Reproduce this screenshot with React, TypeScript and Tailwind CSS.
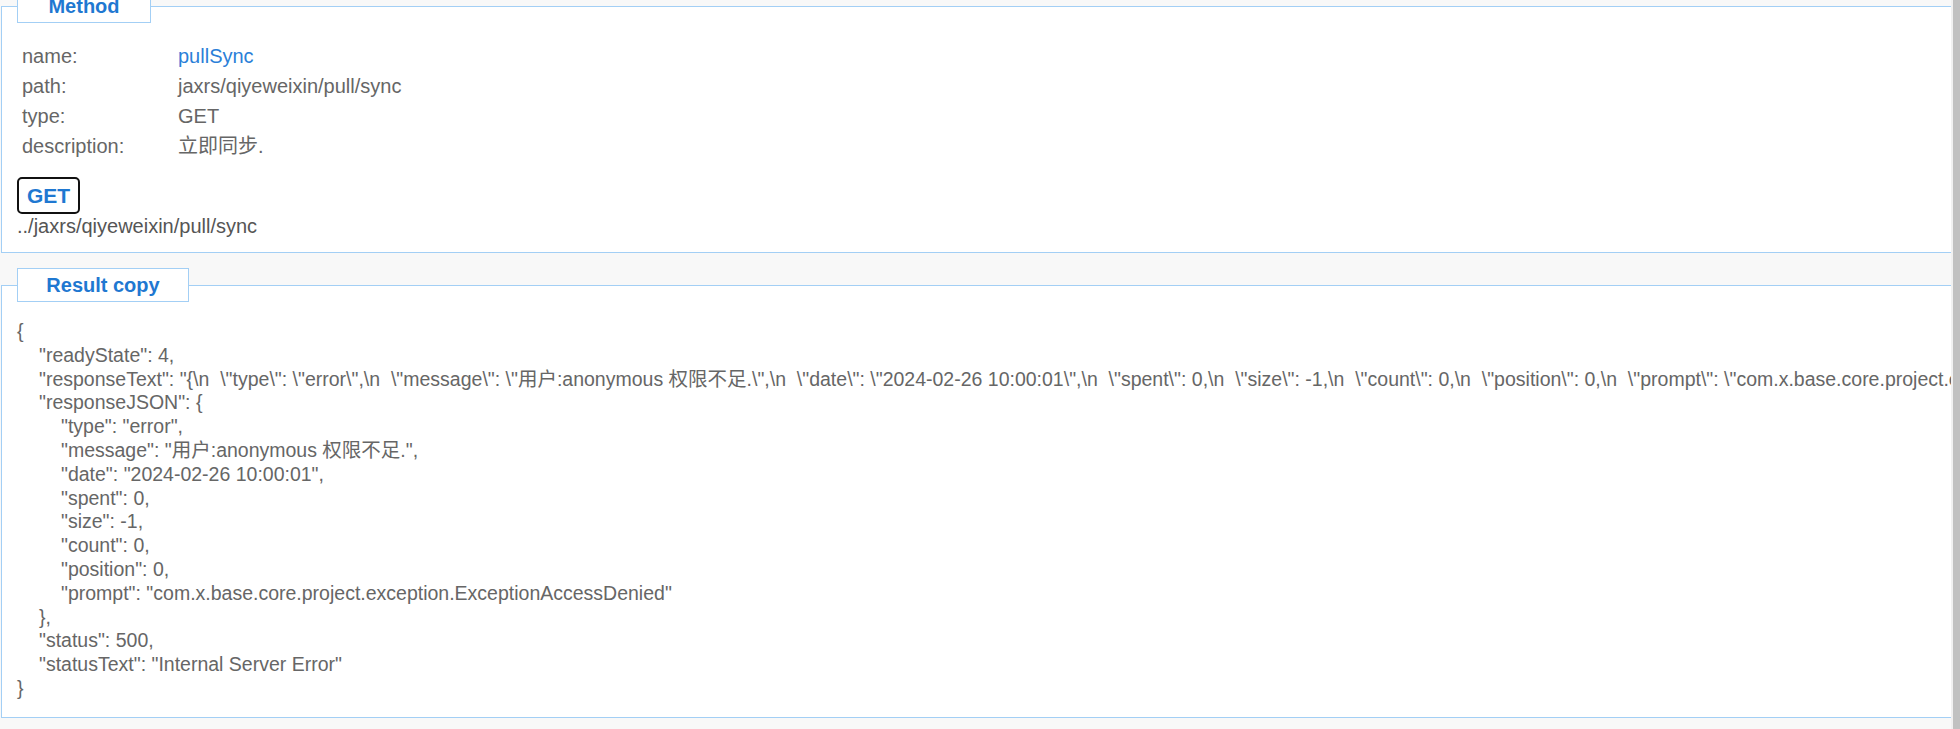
const json: { indent: number; text: string }[] = [
  { indent: 0, text: "{" },
  { indent: 1, text: '"readyState": 4,' },
  {
    indent: 1,
    text: String.raw`"responseText": "{\n  \"type\": \"error\",\n  \"message\": \"用户:anonymous 权限不足.\",\n  \"date\": \"2024-02-26 10:00:01\",\n  \"spent\": 0,\n  \"size\": -1,\n  \"count\": 0,\n  \"position\": 0,\n  \"prompt\": \"com.x.base.core.project.exception.ExceptionAccessDenied\"\n}",`,
  },
  { indent: 1, text: '"responseJSON": {' },
  { indent: 2, text: '"type": "error",' },
  { indent: 2, text: '"message": "用户:anonymous 权限不足.",' },
  { indent: 2, text: '"date": "2024-02-26 10:00:01",' },
  { indent: 2, text: '"spent": 0,' },
  { indent: 2, text: '"size": -1,' },
  { indent: 2, text: '"count": 0,' },
  { indent: 2, text: '"position": 0,' },
  { indent: 2, text: '"prompt": "com.x.base.core.project.exception.ExceptionAccessDenied"' },
  { indent: 1, text: "}," },
  { indent: 1, text: '"status": 500,' },
  { indent: 1, text: '"statusText": "Internal Server Error"' },
  { indent: 0, text: "}" },
];

const indentClass = ["pl-0", "pl-[22px]", "pl-[44px]"];

const rows = [
  { label: "name:", value: "pullSync", link: true },
  { label: "path:", value: "jaxrs/qiyeweixin/pull/sync" },
  { label: "type:", value: "GET" },
  { label: "description:", value: "立即同步." },
];

const Tab = ({ title, width }: { title: string; width: string }) => (
  <div
    className={`ml-[15px] -mt-[18px] h-[34px] ${width} border border-[#a3cff5] bg-white flex items-center justify-center text-[20px] font-bold text-[#1f78d1]`}
  >
    {title}
  </div>
);

export default function App() {
  return (
    <div
      className="flex w-full h-[729px] overflow-hidden bg-[#f8f8f8] text-[#666] text-[20px]"
      style={{ fontFamily: '"Liberation Sans", "Noto Sans CJK SC", sans-serif' }}
    >
      <div className="flex-1 min-w-0 pt-[6px] pl-[1px]">
        {/* method panel */}
        <div className="border border-r-0 border-[#a3cff5] bg-white">
          <Tab title="Method" width="w-[134px]" />
          <div className="pl-[15px] pt-[18px] pb-[14px]">
            {rows.map((r) => (
              <div key={r.label} className="flex pl-[5px] leading-[30px]">
                <span className="w-[156px]">{r.label}</span>
                <span className={r.link ? "text-[#2b80d8]" : ""}>{r.value}</span>
              </div>
            ))}
            <div className="mt-[16px] inline-flex h-[37px] items-center px-[8px] border-2 border-[#111] rounded-[5px] text-[21px] font-bold text-[#1f78d1]">
              GET
            </div>
            <div className="leading-[24px] text-[#555]">../jaxrs/qiyeweixin/pull/sync</div>
          </div>
        </div>

        {/* result panel */}
        <div className="mt-[32px] border border-r-0 border-[#a3cff5] bg-white">
          <Tab title="Result copy" width="w-[172px]" />
          <div className="overflow-hidden pl-[15px] pt-[18px] pb-[16px] text-[19.5px] leading-[23.8px]">
            {json.map((l, i) => (
              <div key={i} className={`whitespace-pre ${indentClass[l.indent]}`}>
                {l.text}
              </div>
            ))}
          </div>
        </div>
      </div>
      {/* scrollbar */}
      <div className="flex w-[9px] shrink-0">
        <div className="w-[2px] bg-[#f1f1f1]" />
        <div className="flex-1 bg-[#c1c1c1]" />
      </div>
    </div>
  );
}
